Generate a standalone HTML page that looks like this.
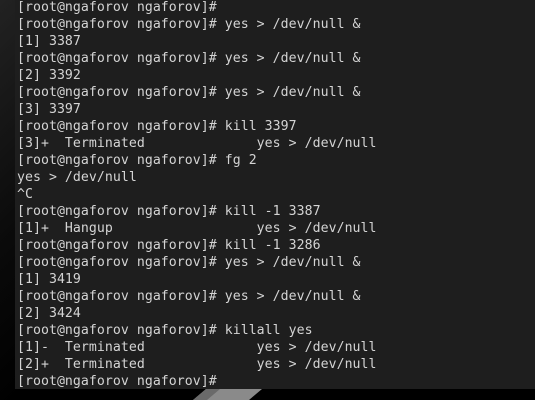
<!DOCTYPE html>
<html><head><style>
html,body{margin:0;padding:0;width:535px;height:400px;background:#000;overflow:hidden}
.left{position:absolute;left:0;top:0;width:15px;height:400px;background:linear-gradient(135deg,#222 0%,#0a0a0a 60%,#000 100%)}
.term{position:absolute;left:15px;top:0;width:520px;height:389px;background:#1e1e1e}
pre{position:absolute;left:17px;top:-1px;margin:0;font-family:"DejaVu Sans Mono","Liberation Mono",monospace;font-size:13.2px;line-height:17px;color:#d4d4d4;letter-spacing:0.05px}
</style></head><body>
<div class="left"></div>
<div class="term"></div>
<svg style="position:absolute;left:0;top:389px" width="535" height="11"><polygon points="193,11 206,0 262,0 249,11" fill="#8a8a8a"/><polygon points="193,11 206,0 220,0 207,11" fill="#6a6a6a"/></svg>
<pre>[root@ngaforov ngaforov]#
[root@ngaforov ngaforov]# yes &gt; /dev/null &amp;
[1] 3387
[root@ngaforov ngaforov]# yes &gt; /dev/null &amp;
[2] 3392
[root@ngaforov ngaforov]# yes &gt; /dev/null &amp;
[3] 3397
[root@ngaforov ngaforov]# kill 3397
[3]+  Terminated              yes &gt; /dev/null
[root@ngaforov ngaforov]# fg 2
yes &gt; /dev/null
^C
[root@ngaforov ngaforov]# kill -1 3387
[1]+  Hangup                  yes &gt; /dev/null
[root@ngaforov ngaforov]# kill -1 3286
[root@ngaforov ngaforov]# yes &gt; /dev/null &amp;
[1] 3419
[root@ngaforov ngaforov]# yes &gt; /dev/null &amp;
[2] 3424
[root@ngaforov ngaforov]# killall yes
[1]-  Terminated              yes &gt; /dev/null
[2]+  Terminated              yes &gt; /dev/null
[root@ngaforov ngaforov]#</pre>
</body></html>
